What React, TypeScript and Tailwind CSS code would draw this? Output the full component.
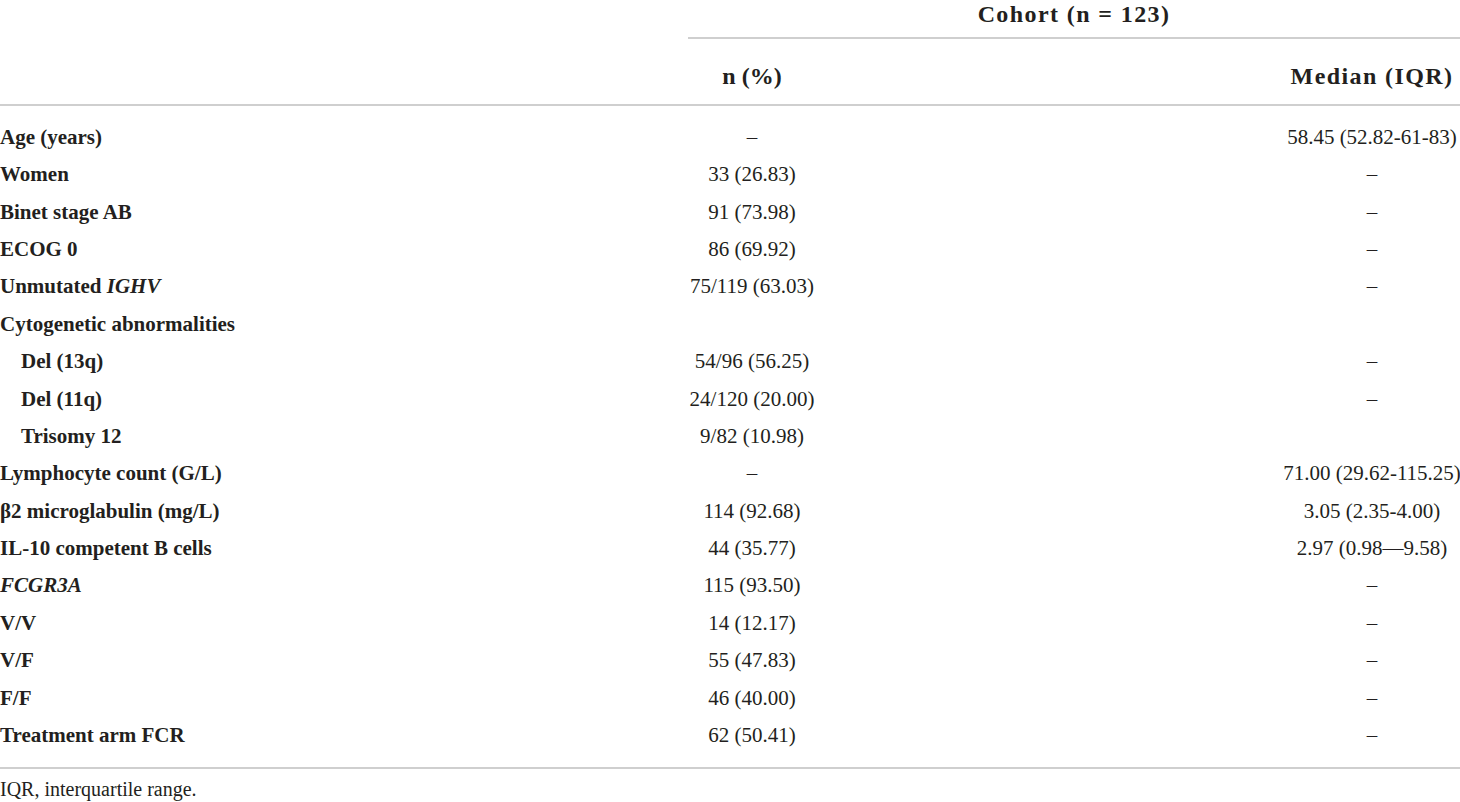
import React from "react";

type Row = { label: React.ReactNode; n: string; med: string; indent?: boolean };

const rows: Row[] = [
  { label: "Age (years)", n: "–", med: "58.45 (52.82-61-83)" },
  { label: "Women", n: "33 (26.83)", med: "–" },
  { label: "Binet stage AB", n: "91 (73.98)", med: "–" },
  { label: "ECOG 0", n: "86 (69.92)", med: "–" },
  {
    label: (
      <>
        Unmutated <i>IGHV</i>
      </>
    ),
    n: "75/119 (63.03)",
    med: "–",
  },
  { label: "Cytogenetic abnormalities", n: "", med: "" },
  { label: "Del (13q)", n: "54/96 (56.25)", med: "–", indent: true },
  { label: "Del (11q)", n: "24/120 (20.00)", med: "–", indent: true },
  { label: "Trisomy 12", n: "9/82 (10.98)", med: "", indent: true },
  { label: "Lymphocyte count (G/L)", n: "–", med: "71.00 (29.62-115.25)" },
  { label: "β2 microglabulin (mg/L)", n: "114 (92.68)", med: "3.05 (2.35-4.00)" },
  { label: "IL-10 competent B cells", n: "44 (35.77)", med: "2.97 (0.98—9.58)" },
  { label: <i>FCGR3A</i>, n: "115 (93.50)", med: "–" },
  { label: "V/V", n: "14 (12.17)", med: "–" },
  { label: "V/F", n: "55 (47.83)", med: "–" },
  { label: "F/F", n: "46 (40.00)", med: "–" },
  { label: "Treatment arm FCR", n: "62 (50.41)", med: "–" },
];

export default function App() {
  return (
    <div
      className="w-[1460px] h-[802px] bg-white text-[#231f20] overflow-hidden"
      style={{ fontFamily: '"Liberation Serif", "Times New Roman", serif' }}
    >
      {/* Header */}
      <div className="grid grid-cols-[688px_1fr]">
        <div />
        <div className="h-[37px] flex items-center justify-center text-[24px] font-bold tracking-[1.4px] pb-[10px]">
          Cohort (n = 123)
        </div>
      </div>
      <div className="grid grid-cols-[688px_1fr]">
        <div />
        <div className="h-[2px] bg-[#cfcfcf]" />
      </div>
      <div className="grid grid-cols-[690px_124px_1fr_176px] h-[65px] items-center text-[24px] font-bold pt-[8px]">
        <div />
        <div className="flex justify-center whitespace-nowrap">n (%)</div>
        <div />
        <div className="flex justify-center whitespace-nowrap tracking-[1.4px]">Median (IQR)</div>
      </div>
      <div className="h-[2px] bg-[#cfcfcf]" />

      {/* Body */}
      <div className="flex flex-col py-[13px]">
        {rows.map((r, i) => (
          <div
            key={i}
            className="grid grid-cols-[690px_124px_1fr_176px] h-[37.375px] items-center text-[21px] whitespace-nowrap"
          >
            <div className={`font-bold ${r.indent ? "pl-[21px]" : ""}`}>{r.label}</div>
            <div className="flex justify-center">{r.n}</div>
            <div />
            <div className="flex justify-center">{r.med}</div>
          </div>
        ))}
      </div>
      <div className="h-[2px] bg-[#cfcfcf]" />
      <div className="pt-[6px] text-[20px] leading-[28px]">IQR, interquartile range.</div>
    </div>
  );
}
